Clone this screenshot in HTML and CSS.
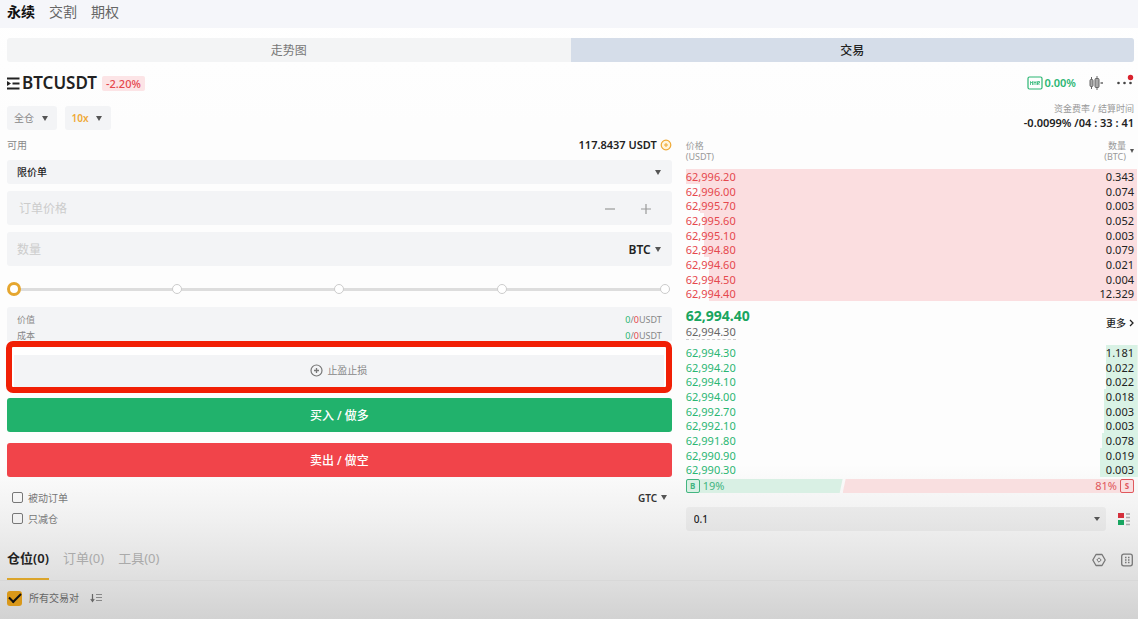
FILE: index.html
```html
<!DOCTYPE html>
<html lang="zh-CN">
	<head>
		<meta charset="UTF-8">
		<meta name="viewport" content="width=device-width, initial-scale=1">
		<title>BTCUSDT 永续</title>
		<link rel="stylesheet" href="styles.css">
	</head>
	<body>
		<nav class="topnav">
			<a class="on" href="#">永续</a>
			<a href="#">交割</a>
			<a href="#">期权</a>
		</nav>

		<div class="switch">
			<button type="button">走势图</button>
			<button type="button" class="on">交易</button>
		</div>

		<header class="symbol">
			<svg class="menu" viewBox="0 0 13 13" width="13" height="13"><path d="M0 1.500h12.500M5.500 6.500h7M0 11.500h12.500" stroke="#222" stroke-width="1.800"/><path d="M0 4l4 2.500L0 9z" fill="#222"/></svg>
			<h1>BTCUSDT</h1>
			<span class="change">-2.20%</span>
			<div class="tools">
				<span class="mmr">
					<svg viewBox="0 0 16 14" width="16" height="14"><rect x="1" y="1" width="14" height="12" rx="1.5" fill="none" stroke="#2bb673" stroke-width="1.2"/><path d="M3.500 9V5.500l1 1.500 1-1.500V9M7 9V5.500l1 1.500 1-1.500V9M10.500 9V5.500h2V7h-2l2 2" fill="none" stroke="#2bb673" stroke-width=".8"/></svg>
					0.00%
				</span>
				<svg viewBox="0 0 16 14" width="16" height="14"><g fill="#aaa" stroke="#666"><path d="M3.500 1v12M9 0v14"/><rect x="2" y="3.500" width="3" height="7" rx="1"/><rect x="7" y="2.500" width="4" height="9" rx="1"/><path d="M12.500 7H15" stroke-width="1.500"/></g></svg>
				<svg viewBox="0 0 18 18" width="18" height="18"><g fill="#444"><circle cx="2.500" cy="9" r="1.300"/><circle cx="8.500" cy="9" r="1.300"/><circle cx="14.500" cy="9" r="1.300"/></g><circle cx="14.500" cy="3.500" r="2.700" fill="#d9232e"/></svg>
			</div>
		</header>

		<div class="margin">
			<button type="button" class="chip">全仓 <i class="arrow"></i></button>
			<button type="button" class="chip lever">10x <i class="arrow"></i></button>
			<div class="funding">
				<span>资金费率 / 结算时间</span>
				<b>-0.0099% /04 : 33 : 41</b>
			</div>
		</div>

		<main class="trade">
			<!-- 下单 -->
			<form class="order">
				<div class="avail">
					<span>可用</span>
					<b>117.8437 USDT</b>
					<svg viewBox="0 0 12 12" width="12" height="12"><circle cx="6" cy="6" r="4.800" fill="#fff5dc" stroke="#efa935" stroke-width="1.200"/><path d="M4 6h4M6 4v4" stroke="#efa935"/></svg>
				</div>
				<div class="pick">
					<select class="type" aria-label="订单类型"><option>限价单</option></select>
					<i class="arrow"></i>
				</div>
				<div class="field">
					<input type="text" placeholder="订单价格" aria-label="订单价格">
					<button type="button" class="step" aria-label="减"><svg viewBox="0 0 12 12" width="12" height="12"><path d="M1 6h10" stroke="#999" stroke-width="1.200"/></svg></button>
					<button type="button" class="step" aria-label="加"><svg viewBox="0 0 12 12" width="12" height="12"><path d="M1 6h10M6 1v10" stroke="#999" stroke-width="1.200"/></svg></button>
				</div>
				<div class="field qty">
					<input type="text" placeholder="数量" aria-label="数量">
					<button type="button" class="unit">BTC <i class="arrow"></i></button>
				</div>
				<div class="slider">
					<div class="dots"><i></i><i></i><i></i><i></i><i></i></div>
					<input type="range" min="0" max="100" value="0" aria-label="仓位比例">
				</div>
				<dl class="cost">
					<div><dt>价值</dt><dd><span class="up">0</span>/<span class="down">0</span>USDT</dd></div>
					<div><dt>成本</dt><dd><span class="up">0</span>/<span class="down">0</span>USDT</dd></div>
				</dl>
				<div class="mark">
					<button type="button" class="tpsl">
						<svg viewBox="0 0 13 13" width="13" height="13"><circle cx="6.500" cy="6.500" r="5.500" fill="none" stroke="#777" stroke-width="1.200"/><path d="M4 6.500h5M6.500 4v5" stroke="#777" stroke-width="1.300"/></svg>
						止盈止损
					</button>
				</div>
				<button type="button" class="buy">买入 / 做多</button>
				<button type="button" class="sell">卖出 / 做空</button>
				<div class="options">
					<label><input type="checkbox">被动订单</label>
					<button type="button" class="gtc">GTC <i class="arrow"></i></button>
				</div>
				<div class="options">
					<label><input type="checkbox">只减仓</label>
				</div>
			</form>

			<!-- 盘口 -->
			<section class="book">
				<div class="head">
					<span>价格<br>(USDT)</span>
					<span class="num">数量<br>(BTC)</span>
					<i class="arrow"></i>
				</div>
				<table class="asks" aria-label="卖盘">
					<tr style="--depth:100%"><td>62,996.20</td><td>0.343</td></tr>
					<tr style="--depth:97%"><td>62,996.00</td><td>0.074</td></tr>
					<tr style="--depth:97%"><td>62,995.70</td><td>0.003</td></tr>
					<tr style="--depth:96%"><td>62,995.60</td><td>0.052</td></tr>
					<tr style="--depth:96%"><td>62,995.10</td><td>0.003</td></tr>
					<tr style="--depth:96%"><td>62,994.80</td><td>0.079</td></tr>
					<tr style="--depth:95%"><td>62,994.60</td><td>0.021</td></tr>
					<tr style="--depth:95%"><td>62,994.50</td><td>0.004</td></tr>
					<tr style="--depth:95%"><td>62,994.40</td><td>12.329</td></tr>
				</table>
				<div class="last">
					<div>
						<strong>62,994.40</strong>
						<span>62,994.30</span>
					</div>
					<a href="#">更多 <svg viewBox="0 0 5 8" width="5" height="8"><path d="M1 1l3 3-3 3" fill="none" stroke="#222" stroke-width="1.300"/></svg></a>
				</div>
				<table class="bids" aria-label="买盘">
					<tr style="--depth:7%"><td>62,994.30</td><td>1.181</td></tr>
					<tr style="--depth:7%"><td>62,994.20</td><td>0.022</td></tr>
					<tr style="--depth:7%"><td>62,994.10</td><td>0.022</td></tr>
					<tr style="--depth:7.5%"><td>62,994.00</td><td>0.018</td></tr>
					<tr style="--depth:7.5%"><td>62,992.70</td><td>0.003</td></tr>
					<tr style="--depth:7.5%"><td>62,992.10</td><td>0.003</td></tr>
					<tr style="--depth:8%"><td>62,991.80</td><td>0.078</td></tr>
					<tr style="--depth:8.4%"><td>62,990.90</td><td>0.019</td></tr>
					<tr style="--depth:8.4%"><td>62,990.30</td><td>0.003</td></tr>
				</table>
				<div class="ratio">
					<span class="b" style="flex-basis:35%"><i>B</i>19%</span>
					<span class="s">81%<i>S</i></span>
				</div>
				<div class="depth">
					<div class="pick">
						<select aria-label="深度"><option>0.1</option></select>
						<i class="arrow"></i>
					</div>
					<button type="button" class="view" aria-label="盘口显示"><svg viewBox="0 0 14 14" width="14" height="14"><path d="M1 1h6v5H1z" fill="#d4303c"/><path d="M1 8h6v5H1z" fill="#18a560"/><path d="M9 2h4M9 5.500h4M9 9h4M9 12.500h4" stroke="#aaa" stroke-width="1.500"/></svg></button>
				</div>
			</section>
		</main>

		<nav class="tabs">
			<a class="on" href="#">仓位(0)</a>
			<a href="#">订单(0)</a>
			<a href="#">工具(0)</a>
			<div class="tabtools">
				<svg viewBox="0 0 14 14" width="14" height="14"><path d="M4 1.500h6L13.200 7 10 12.500H4L.8 7z" fill="none" stroke="#777" stroke-width="1.300" stroke-linejoin="round"/><path d="M7 4.800L9.200 7 7 9.200 4.800 7z" fill="none" stroke="#777"/></svg>
				<svg viewBox="0 0 14 14" width="14" height="14"><rect x="1.700" y="1.200" width="10.600" height="11.600" rx="2" fill="none" stroke="#777" stroke-width="1.300"/><path d="M5 4.500h1.500M8 4.500h1.500M5 7h1.500M8 7h1.500M5 9.500h1.500M8 9.500h1.500" stroke="#777" stroke-width="1.300"/></svg>
			</div>
		</nav>
		<div class="filter">
			<label><input type="checkbox" checked>所有交易对</label>
			<svg viewBox="0 0 12 10" width="12" height="10"><path d="M2.500 1v7M.8 6l1.700 2.500L4.200 6" fill="none" stroke="#666" stroke-width="1.200"/><path d="M6 1.500h6M6 4.500h6M6 7.500h6" stroke="#888"/></svg>
		</div>
	</body>
</html>
```
FILE: styles.css
```css
*{
	margin: 0;
	padding: 0;
	box-sizing: border-box;
}
body{
	min-height: 100vh;
	font: 10px/14px "Noto Sans", "Noto Sans CJK SC", sans-serif;
	color: #222;
	background: linear-gradient(#fff 0, #fdfdfd 20%, #fdfdfd 75%, #f0f0f0 84%, #e2e2e2 92%, #d2d2d2 100%);
}
button, input, select{
	font: inherit;
	color: inherit;
	border: 0;
	background: none;
	outline: none;
	appearance: none;
}
a{
	color: inherit;
	text-decoration: none;
}
svg{
	display: block;
	flex: none;
}
.arrow{
	display: inline-block;
	flex: none;
	border: 3px solid transparent;
	border-top: 5px solid #555;
	border-bottom: 0;
}
.up{
	color: #2bb673;
}
.down{
	color: #e5484d;
}

/* 顶部 */
.topnav{
	display: flex;
	gap: 14px;
	height: 28px;
	padding: 0 7px;
	font-size: 14px;
	line-height: 24px;
	color: #666;
	background: #f5f6fa;
}
.topnav .on{
	color: #111;
	font-weight: bold;
}
.switch{
	display: flex;
	margin: 10px 4px 0 7px;
	border-radius: 3px;
	overflow: hidden;
	background: #f3f4f5;
}
.switch button{
	flex: 1;
	height: 24px;
	padding-top: 1px;
	font-size: 12px;
	color: #777;
}
.switch .on{
	color: #222;
	font-weight: 500;
	background: #d5dde9;
}
.symbol{
	display: flex;
	align-items: center;
	height: 22px;
	margin: 10px 4px 0 7px;
}
.symbol h1{
	margin: 0 5px 0 2px;
	font-size: 17px;
	line-height: 22px;
	font-weight: 600;
}
.change{
	padding: 0 4px;
	font-size: 11px;
	font-weight: 500;
	line-height: 15px;
	border-radius: 2px;
	color: #e5484d;
	background: #fce4e6;
}
.tools, .mmr{
	display: flex;
	align-items: center;
}
.tools{
	gap: 12px;
	margin-left: auto;
}
.mmr{
	gap: 1px;
	font-size: 11px;
	font-weight: 600;
	color: #2bb673;
}
.margin{
	display: flex;
	align-items: flex-end;
	gap: 8px;
	height: 36px;
	margin: 0 4px 0 7px;
}
.chip{
	height: 24px;
	padding: 0 9px 0 7px;
	border-radius: 3px;
	color: #888;
	background: #f3f4f6;
}
.chip .arrow{
	margin: 0 0 1px 5px;
}
.lever{
	font-weight: 600;
	color: #efa935;
}
.funding{
	margin-left: auto;
	text-align: right;
}
.funding span, .funding b{
	display: block;
}
.funding span{
	font-size: 9px;
	color: #999;
}
.funding b{
	font-size: 11px;
	font-weight: 600;
	line-height: 14px;
}

.trade{
	display: grid;
	grid-template-columns: 1.47fr 1fr;
	gap: 14px;
	padding: 8px 0 0 7px;
}

/* 下单 */
.order{
	display: flex;
	flex-direction: column;
}
.avail{
	display: flex;
	align-items: center;
	height: 14px;
	color: #888;
}
.avail b{
	margin: 0 3px 0 auto;
	font-size: 11px;
	font-weight: 600;
	color: #222;
}
.pick{
	display: grid;
	align-items: center;
	border-radius: 3px;
	background: #f3f4f6;
}
.pick > *{
	grid-area: 1 / 1;
}
.pick select{
	height: 24px;
	padding: 0 10px;
	font-weight: 500;
}
.pick .arrow{
	justify-self: end;
	margin-right: 11px;
	pointer-events: none;
}
.order .pick{
	margin-top: 8px;
}
.field{
	display: flex;
	align-items: center;
	height: 34px;
	margin-top: 7px;
	padding: 1px 20px 0 12px;
	border-radius: 3px;
	background: #f3f4f6;
}
.field input{
	flex: 1;
	min-width: 0;
	font-size: 12px;
}
.field input::placeholder{
	color: #ccc;
}
.step{
	margin-left: 24px;
}
.qty{
	padding: 1px 11px 0 10px;
}
.unit{
	font-size: 12px;
	font-weight: 600;
}
.unit .arrow, .gtc .arrow{
	margin: 0 0 2px 1px;
}
.slider{
	display: grid;
	align-items: center;
	height: 14px;
	margin: 16px 0 11px;
}
.slider > *{
	grid-area: 1 / 1;
}
.dots{
	display: flex;
	justify-content: space-between;
	margin: 0 2px;
	background: linear-gradient(#ddd, #ddd) center / 100% 3px no-repeat;
}
.dots i{
	width: 10px;
	height: 10px;
	border: 1px solid #ccc;
	border-radius: 50%;
	background: #fff;
}
.slider input{
	width: 100%;
	height: 14px;
}
.slider input::-webkit-slider-thumb{
	appearance: none;
	width: 14px;
	height: 14px;
	border: 3px solid #e5a62f;
	border-radius: 50%;
	background: #fff;
}
.cost{
	height: 34px;
	padding: 5px 10px 0;
	font-size: 9px;
	line-height: 16px;
	border-radius: 3px 3px 0 0;
	color: #888;
	background: #f3f4f6;
}
.cost div{
	display: flex;
	justify-content: space-between;
}
.mark{
	display: flex;
	margin: 0 0 5px -1px;
	padding: 8px 2px 0;
	border: 6px solid #f11f05;
	border-radius: 7px;
	background: #fff;
}
.tpsl{
	display: flex;
	flex: 1;
	align-items: center;
	justify-content: center;
	gap: 4px;
	height: 32px;
	padding-bottom: 2px;
	color: #888;
	background: #f3f4f6;
}
.buy, .sell{
	height: 34px;
	margin-bottom: 11px;
	padding-top: 1px;
	font-size: 12px;
	font-weight: 500;
	border-radius: 3px;
	color: #fff;
	background: #21b26c;
}
.sell{
	margin-bottom: 10px;
	background: #f1444a;
}
.options{
	display: flex;
	align-items: center;
	justify-content: space-between;
	height: 21px;
	padding: 0 5px;
	color: #777;
}
label{
	display: flex;
	align-items: center;
	gap: 5px;
}
.options input{
	width: 11px;
	height: 11px;
	border: 1px solid #777;
	border-radius: 2px;
}
.gtc{
	font-weight: 600;
	color: #333;
}

/* 盘口 */
.head{
	display: flex;
	align-items: center;
	height: 31px;
	padding: 0 4px 6px 0;
	font-size: 9px;
	line-height: 11px;
	color: #999;
}
.head .num{
	margin: 0 4px 0 auto;
	text-align: right;
}
.head .arrow{
	border-width: 4px 2px 0;
}
.book table{
	width: 100%;
	border-collapse: collapse;
	font-size: 11px;
	line-height: 14px;
}
.book tr{
	height: 15px;
	background: linear-gradient(var(--bar), var(--bar)) right / var(--depth) 100% no-repeat;
}
.book tr:nth-child(3n){
	height: 14px;
}
.book td:last-child{
	padding-right: 4px;
	text-align: right;
}
.asks{
	--bar: #fbdee0;
}
.bids{
	--bar: #d9f2e5;
}
.asks td:first-child{
	color: #e5484d;
}
.bids td:first-child{
	color: #2bb673;
}
.last{
	display: flex;
	align-items: center;
	justify-content: space-between;
	height: 44px;
	padding-right: 4px;
}
.last strong, .last span{
	display: block;
}
.last strong{
	font-size: 14px;
	line-height: 18px;
	font-weight: bold;
	color: #18a560;
}
.last span{
	width: max-content;
	font-size: 11px;
	border-bottom: 1px dashed #ccc;
	color: #666;
}
.last a{
	display: flex;
	align-items: center;
	gap: 3px;
	font-weight: 500;
}
.ratio{
	display: flex;
	gap: 0;
	height: 14px;
	margin: 2px 4px 0 0;
	font-size: 11px;
}
.ratio span{
	display: flex;
	align-items: center;
	gap: 3px;
}
.ratio i{
	width: 14px;
	height: 14px;
	font-size: 8px;
	line-height: 12px;
	font-style: normal;
	font-weight: bold;
	text-align: center;
	border: 1px solid;
	border-radius: 2px;
}
.ratio .b{
	color: #43b581;
	background: #d9f0e4;
	clip-path: polygon(0 0, 100% 0, calc(100% - 3px) 100%, 0 100%);
}
.ratio .s{
	flex: 1;
	justify-content: flex-end;
	color: #e0575c;
	background: #f9dfe0;
	clip-path: polygon(3px 0, 100% 0, 100% 100%, 0 100%);
}
.depth{
	display: flex;
	gap: 8px;
	margin: 14px 4px 0 0;
}
.depth .pick{
	flex: 1;
	background: rgba(0, 0, 0, .04);
}
.depth .pick select{
	padding: 0 8px;
}
.depth .pick .arrow{
	margin-right: 6px;
	border-top-width: 4px;
}
.view{
	display: flex;
	align-items: center;
	justify-content: center;
	width: 20px;
}

/* 仓位 */
.tabs{
	display: flex;
	gap: 14px;
	height: 42px;
	margin-top: 8px;
	padding: 0 4px 0 7px;
	font-size: 13px;
	line-height: 38px;
	border-bottom: 1px solid #d8d8d8;
	color: #aaa;
}
.tabs .on{
	font-weight: 600;
	border-bottom: 2px solid #dba52c;
	color: #222;
}
.tabtools{
	display: flex;
	align-items: center;
	gap: 14px;
	margin-left: auto;
}
.filter{
	display: flex;
	align-items: center;
	gap: 11px;
	height: 34px;
	padding: 0 7px;
	color: #666;
}
.filter label{
	gap: 7px;
}
.filter input{
	display: grid;
	place-items: center;
	width: 15px;
	height: 15px;
	border-radius: 3px;
	background: #d9981a;
}
.filter input:checked::before{
	content: "";
	width: 10px;
	height: 5px;
	margin-bottom: 3px;
	border: solid #111;
	border-width: 0 0 2px 2px;
	transform: rotate(-45deg);
}
```
